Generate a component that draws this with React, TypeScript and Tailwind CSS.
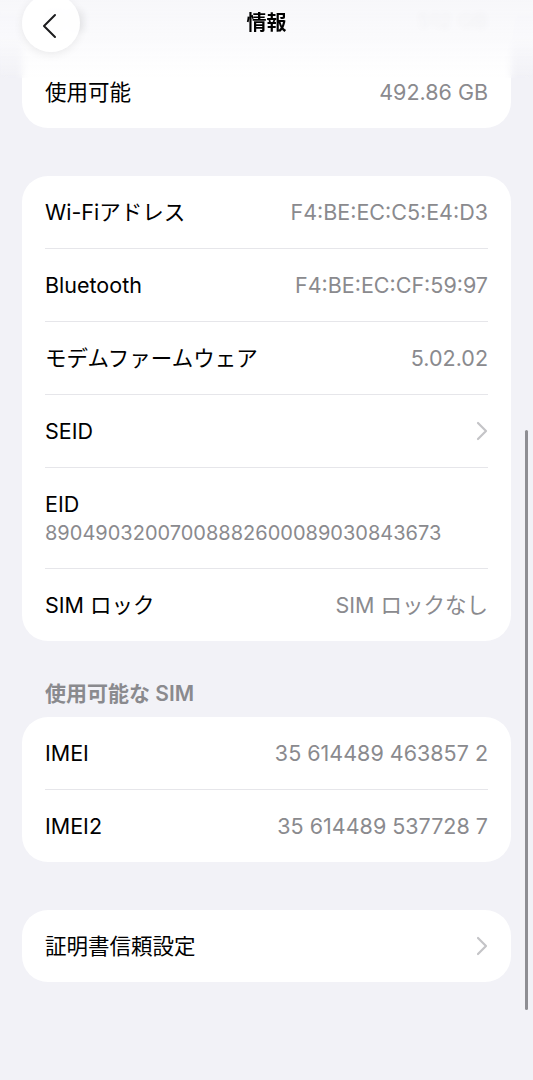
import React from 'react'

const font = { fontFamily: 'Inter, "Noto Sans CJK JP", sans-serif' }

interface Row {
  label: string
  value?: string
  chevron?: boolean
  stacked?: boolean
}

const networkRows: Row[] = [
  { label: 'Wi-Fiアドレス', value: 'F4:BE:EC:C5:E4:D3' },
  { label: 'Bluetooth', value: 'F4:BE:EC:CF:59:97' },
  { label: 'モデムファームウェア', value: '5.02.02' },
  { label: 'SEID', chevron: true },
  { label: 'EID', value: '89049032007008882600089030843673', stacked: true },
  { label: 'SIM ロック', value: 'SIM ロックなし' },
]

const simRows: Row[] = [
  { label: 'IMEI', value: '35 614489 463857 2' },
  { label: 'IMEI2', value: '35 614489 537728 7' },
]

function Chevron() {
  return (
    <svg width="12" height="20" viewBox="0 0 12 20" fill="none">
      <path d="M2 2l8 8-8 8" stroke="#c4c4c7" strokeWidth="2.2" strokeLinecap="round" strokeLinejoin="round" />
    </svg>
  )
}

function ListRow({ row, last }: { row: Row; last: boolean }) {
  return (
    <div className="px-[23px]">
      {row.stacked ? (
        <div className="h-[100px] flex flex-col justify-center">
          <span className="text-[21.5px] text-black leading-[30px]">{row.label}</span>
          <span className="text-[20px] text-[#8a8a8e] leading-[28px]">{row.value}</span>
        </div>
      ) : (
        <div className="h-[72px] flex items-center justify-between">
          <span className="text-[21.5px] text-black">{row.label}</span>
          {row.chevron ? (
            <Chevron />
          ) : (
            <span className="text-[21.5px] text-[#8a8a8e]">{row.value}</span>
          )}
        </div>
      )}
      {!last && <div className="h-px bg-[#e6e6ea]" />}
    </div>
  )
}

function Card({ rows }: { rows: Row[] }) {
  return (
    <div className="bg-white rounded-[26px] overflow-hidden">
      {rows.map((row, i) => (
        <ListRow key={row.label} row={row} last={i === rows.length - 1} />
      ))}
    </div>
  )
}

export default function App() {
  return (
    <div className="relative w-[533px] h-[1080px] overflow-hidden bg-[#f2f2f7]" style={font}>
      {/* 本文 */}
      <div className="flex flex-col px-[22px] mt-[-16px]">
        {/* ストレージ */}
        <div className="bg-white rounded-b-[26px]">
          <div className="h-[72px] px-[23px] flex items-center justify-between">
            <span className="text-[21.5px] text-black">容量</span>
            <span className="text-[21.5px] text-[#8a8a8e]">512 GB</span>
          </div>
          <div className="h-[72px] px-[23px] flex items-center justify-between">
            <span className="text-[21.5px] text-black">使用可能</span>
            <span className="text-[21.5px] text-[#8a8a8e]">492.86 GB</span>
          </div>
        </div>

        <div className="mt-[48px]">
          <Card rows={networkRows} />
        </div>

        <div className="h-[76px] pt-[38px] px-[23px] leading-[30px]">
          <span className="text-[21px] font-semibold text-[#8a8a8e]">使用可能な SIM</span>
        </div>
        <Card rows={simRows} />

        <div className="mt-[48px]">
          <Card rows={[{ label: '証明書信頼設定', chevron: true }]} />
        </div>
      </div>

      {/* ヘッダー（スクロールエッジ） */}
      <div className="absolute top-0 left-0 right-0 h-[78px] bg-gradient-to-b from-[#f7f7fa]/95 via-[#fafafc]/90 to-transparent backdrop-blur-[3px]" />
      <div className="absolute top-0 left-0 right-0 h-[46px] flex items-center justify-center">
        <span className="text-[20px] font-bold text-black">情報</span>
      </div>
      <button className="absolute left-[22px] top-[-6px] w-[58px] h-[58px] rounded-full bg-white/90 shadow-[0_2px_10px_rgba(0,0,0,0.08)] flex items-center justify-center">
        <svg width="18" height="26" viewBox="0 0 18 26" fill="none" className="mt-[6px] mr-[2px]">
          <path d="M14 2L3 13l11 11" stroke="#1c1c1e" strokeWidth="2" strokeLinecap="round" strokeLinejoin="round" />
        </svg>
      </button>

      {/* スクロールバー */}
      <div className="absolute left-[525px] top-[430px] w-[3px] h-[580px] rounded-full bg-[#8e8e93]" />
    </div>
  )
}
